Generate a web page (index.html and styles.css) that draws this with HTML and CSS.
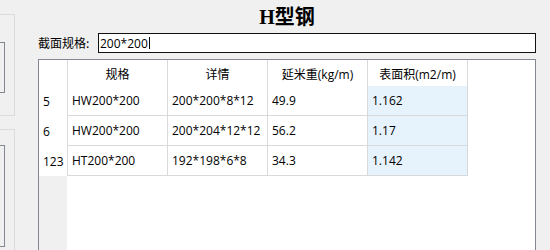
FILE: index.html
```html
<!DOCTYPE html>
<html lang="zh-CN">
<head>
<meta charset="utf-8">
<title>H型钢</title>
<link rel="stylesheet" href="styles.css">
</head>
<body>
<div class="window">
  <div class="side">
    <div class="group g1"><div class="inner i1"></div></div>
    <div class="group g2"><div class="inner i2"></div></div>
  </div>
  <div class="main">
    <div class="title">H型钢</div>
    <div class="search">
      <span class="label">截面规格:</span>
      <div class="field">200*200<span class="caret"></span></div>
    </div>
    <div class="grid">
      <div class="row head">
        <div class="rh"></div>
        <div class="c">规格</div>
        <div class="c">详情</div>
        <div class="c">延米重(kg/m)</div>
        <div class="c last">表面积(m2/m)</div>
      </div>
      <div class="row">
        <div class="rh">5</div>
        <div class="c">HW200*200</div>
        <div class="c">200*200*8*12</div>
        <div class="c">49.9</div>
        <div class="c last sel">1.162</div>
      </div>
      <div class="row">
        <div class="rh">6</div>
        <div class="c">HW200*200</div>
        <div class="c">200*204*12*12</div>
        <div class="c">56.2</div>
        <div class="c last sel">1.17</div>
      </div>
      <div class="row">
        <div class="rh">123</div>
        <div class="c">HT200*200</div>
        <div class="c">192*198*6*8</div>
        <div class="c">34.3</div>
        <div class="c last sel">1.142</div>
      </div>
      <div class="filler"><div class="rh-fill"></div></div>
    </div>
  </div>
</div>
</body>
</html>
```

FILE: styles.css
```css
html, body {
  margin: 0;
  padding: 0;
  background: #f0f0f0;
  width: 550px;
  height: 250px;
  overflow: hidden;
}
.window {
  display: flex;
  align-items: flex-start;
  font-family: "Open Sans", "Noto Sans CJK SC", sans-serif;
  font-size: 12px;
  color: #000;
}
.side {
  width: 15px;
  display: flex;
  flex-direction: column;
}
.group {
  box-sizing: border-box;
  width: 15px;
  border: 1px solid #dcdcdc;
  border-left: none;
}
.g1 {
  margin-top: 14px;
  height: 102px;
}
.g2 {
  margin-top: 13px;
  height: 121px;
  border-bottom: none;
}
.inner {
  box-sizing: border-box;
  width: 5px;
  border: 1px solid #828790;
  border-left: none;
}
.i1 {
  margin-top: 27px;
  height: 51px;
}
.i2 {
  margin-top: 15px;
  height: 102px;
}
.main {
  margin-left: 23px;
  width: 498px;
  display: flex;
  flex-direction: column;
}
.title {
  height: 33px;
  line-height: 34px;
  text-align: center;
  font-family: "Liberation Serif", "Noto Sans CJK SC", serif;
  font-weight: bold;
  font-size: 20px;
}
.search {
  display: flex;
  align-items: center;
  height: 20px;
}
.label {
  width: 60px;
  font-family: "Noto Sans CJK SC", sans-serif;
  font-size: 12px;
  line-height: 20px;
}
.field {
  flex: 1;
  box-sizing: border-box;
  height: 20px;
  border: 1px solid #111;
  background: #fff;
  padding-left: 1px;
  line-height: 17px;
  font-size: 12px;
  display: flex;
  align-items: center;
}
.caret {
  display: inline-block;
  width: 1px;
  height: 12px;
  background: #000;
  margin-left: 1px;
}
.grid {
  margin-top: 6px;
  box-sizing: border-box;
  height: 191px;
  border: 1px solid #828790;
  border-bottom: none;
  background: #fff;
  display: flex;
  flex-direction: column;
}
.row {
  display: flex;
  height: 30px;
}
.row.head {
  height: 26px;
}
.rh {
  width: 28px;
  box-sizing: border-box;
  padding-left: 4px;
  display: flex;
  align-items: center;
  background: #fff;
}
.c {
  box-sizing: border-box;
  width: 100px;
  border-left: 1px solid #d9d9d9;
  border-bottom: 1px solid #d9d9d9;
  padding-left: 4px;
  display: flex;
  align-items: center;
  white-space: nowrap;
}
.c.last {
  width: 101px;
  border-right: 1px solid #d9d9d9;
}
.head .c {
  border-bottom: none;
  justify-content: center;
  padding-left: 0;
  padding-top: 1px;
}
.sel {
  background: #e6f2fc;
}
.filler {
  flex: 1;
  display: flex;
}
.rh-fill {
  width: 28px;
  background: #f0f0f0;
}
```
